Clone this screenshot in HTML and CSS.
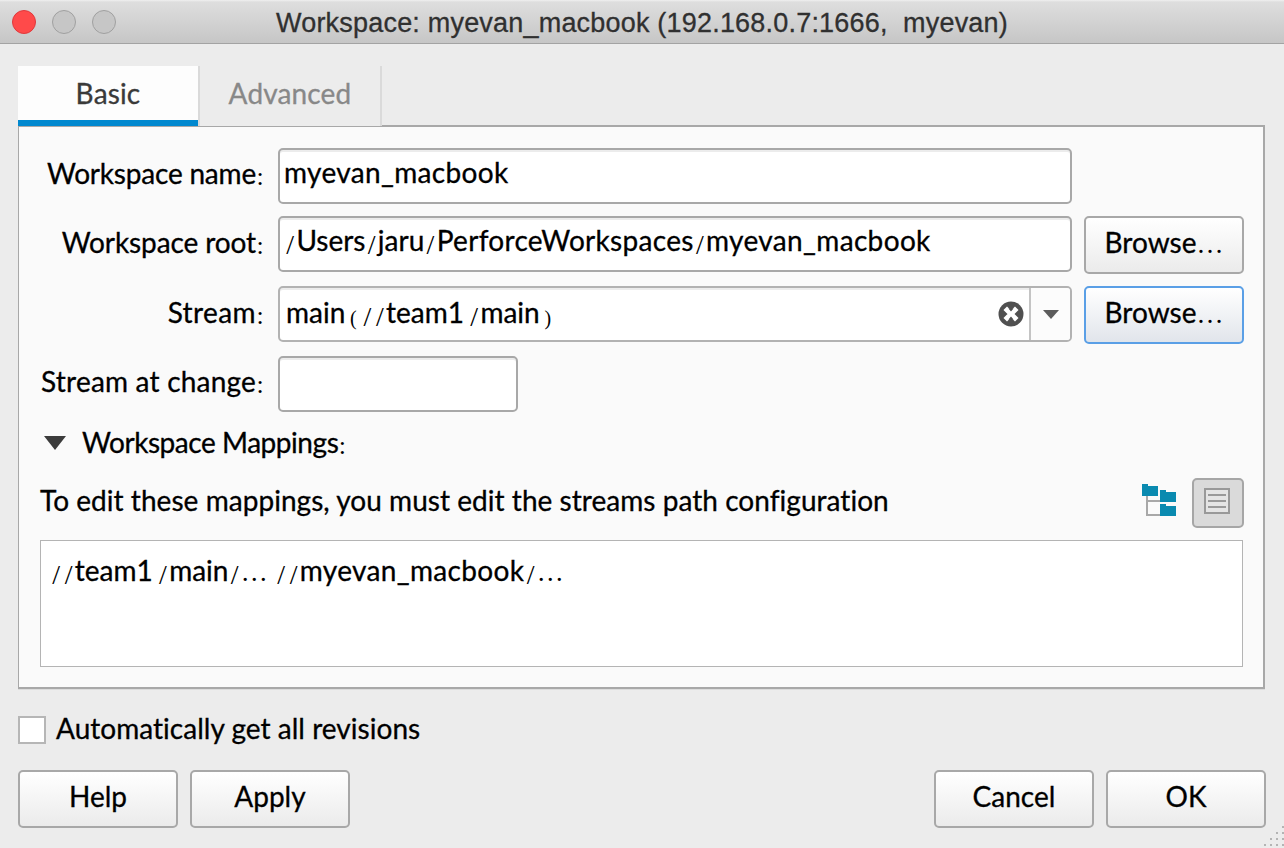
FILE: index.html
```
<!DOCTYPE html>
<html lang="en">
<head>
<meta charset="utf-8">
<title>Workspace: myevan_macbook</title>
<link rel="stylesheet" href="styles.css">
</head>
<body>
<div class="window">
  <header class="titlebar">
    <div class="lights"><i class="light close"></i><i class="light"></i><i class="light"></i></div>
    <h1 class="title">Workspace: myevan_macbook (192.168.0.7:1666,&nbsp; myevan)</h1>
  </header>

  <nav class="tabs">
    <div class="tab active">Basic</div>
    <div class="tab">Advanced</div>
  </nav>

  <main class="panel">
    <div class="form">
      <label class="label w-name">Workspace name<span class="colon">:</span></label>
      <div class="input wide"><span class="id">myevan_macbook</span></div>
      <span></span>

      <label class="label low w-root">Workspace root<span class="colon">:</span></label>
      <div class="input wide"><span class="slash">/</span>Users<span class="slash">/</span>jaru<span class="slash">/</span><span class="pf">PerforceWorkspaces</span><span class="slash">/</span><span class="id">myevan_macbook</span></div>
      <button class="button">Browse<span class="dots">…</span></button>

      <label class="label low w-stream">Stream<span class="colon">:</span></label>
      <div class="input wide combo">
        <span class="value">main<span class="paren">(</span><span class="slash">/</span><span class="slash">/</span>team1<span class="slash after-digit">/</span>main<span class="paren">)</span></span>
        <svg class="clear" width="26" height="26" viewBox="0 0 26 26"><circle cx="13" cy="13" r="12.5" fill="#505050"/><path d="M9 9l8 8M17 9l-8 8" stroke="#fff" stroke-width="5" stroke-linecap="square"/><path d="M13 10.5l2.5-3h-5zM13 15.5l2.5 3h-5z" fill="#505050"/></svg>
        <span class="drop"><svg width="16" height="9" viewBox="0 0 16 9"><path d="M0 0h16L8 9z" fill="#5c5c5c"/></svg></span>
      </div>
      <button class="button focused">Browse<span class="dots">…</span></button>

      <label class="label w-change">Stream at change<span class="colon">:</span></label>
      <div class="input short"></div>
      <span></span>
    </div>

    <div class="disclosure">
      <svg width="22" height="14" viewBox="0 0 22 14"><path d="M0 0h22L11 14z" fill="#3b3b3b"/></svg>
      <span class="heading">Workspace Mappings<span class="colon">:</span></span>
    </div>

    <div class="hint">
      <span class="hint-text">To edit these mappings, you must edit the streams path configuration</span>
      <svg class="tree" width="34" height="32" viewBox="0 0 34 32">
        <path d="M5 12v19h14M5 17h14" fill="none" stroke="#a8a8a8" stroke-width="2"/>
        <path d="M0 0h6v2h10v10H0zM18 6h6v2h10v10H18zM18 20h6v2h10v10H18z" fill="#0a8ab0"/>
      </svg>
      <span class="toggle">
        <svg width="26" height="26" viewBox="0 0 26 26"><path d="M1 1h24v24H1z" fill="#e4e4e4" stroke="#999" stroke-width="2"/><path d="M4 7h18M4 13h18M4 19h18" stroke="#999" stroke-width="2"/></svg>
      </span>
    </div>

    <div class="mappings"><span class="slash">/</span><span class="slash">/</span>team1<span class="slash after-digit">/</span>main<span class="slash">/</span><span class="dots">…</span> <span class="slash">/</span><span class="slash">/</span><span class="id">myevan_macbook</span><span class="slash">/</span><span class="dots">…</span></div>
  </main>

  <label class="auto"><i class="checkbox"></i>Automatically get all revisions</label>

  <footer class="actions">
    <button class="button">Help</button>
    <button class="button">Apply</button>
    <span class="spacer"></span>
    <button class="button">Cancel</button>
    <button class="button">OK</button>
  </footer>

  <svg class="grip" width="20" height="20" viewBox="0 0 20 20"><path d="M18 0h2v2h-2zM12 6h2v2h-2zM18 6h2v2h-2zM6 12h2v2H6zM12 12h2v2h-2zM18 12h2v2h-2zM0 18h2v2H0zM6 18h2v2H6zM12 18h2v2h-2zM18 18h2v2h-2z" fill="#b4b4b4"/></svg>
</div>
</body>
</html>
```
FILE: styles.css
```
* { box-sizing: border-box; }

body {
  margin: 0;
  background: #ececec;
  color: #000;
  font: 28px/34px Lato, "Liberation Sans", sans-serif;
  font-variant-ligatures: none;
  -webkit-text-stroke: 0.3px;
}

.window {
  position: relative;
  width: 1284px;
  height: 848px;
  overflow: hidden;
  white-space: nowrap;
}

svg { display: block; flex: none; }

.titlebar {
  display: grid;
  grid-template-columns: 1fr auto 1fr;
  align-items: start;
  height: 44px;
  border-bottom: 1px solid #a3a3a3;
  background: linear-gradient(#f0f0f0 0, #dedede 2px, #c6c6c6 100%);
}
.lights { display: flex; gap: 16px; padding: 10px 0 0 12px; }
.light {
  width: 24px;
  height: 24px;
  border: 1px solid #a0a0a0;
  border-radius: 50%;
  background: #c6c6c6;
}
.light.close { border-color: #e0393c; background: #ff4a4a; }
.title {
  margin: 0;
  color: #303030;
  font: 400 27px/46px "Liberation Sans", Arial, sans-serif;
  letter-spacing: 0.2px;
}

.tabs {
  position: relative;
  z-index: 1;
  display: flex;
  width: 364px;
  margin: 22px 0 -1px 18px;
}
.tab {
  width: 182px;
  height: 60px;
  border-right: 2px solid #dadada;
  background: #ececec;
  color: #888;
  line-height: 54px;
  letter-spacing: 0.15px;
  text-align: center;
}
.tab.active {
  background: linear-gradient(#0088cf, #0088cf) bottom / 100% 6px no-repeat content-box, #fdfdfd;
  color: #3a3a3a;
}

.panel {
  width: 1247px;
  height: 564px;
  margin-left: 18px;
  padding: 21px 20px 0 21px;
  border: solid #a8a8a8;
  border-width: 2px 2px 2px 1px;
  background: #fafafa;
  box-shadow: 0 1px 0 #dcdcdc;
}

.form {
  display: grid;
  grid-template-columns: 226px 794px 160px;
  gap: 12px;
  align-items: start;
}
.label { padding-right: 2px; line-height: 50px; text-align: right; }
.label.low { line-height: 52px; }
.w-name { letter-spacing: -0.2px; }
.w-root { letter-spacing: -0.1px; }
.w-stream { letter-spacing: 0.4px; }
.w-change { letter-spacing: 0.2px; }

.input {
  height: 56px;
  padding-left: 4px;
  border: 2px solid #a8a8a8;
  border-radius: 5px;
  background: #fff;
  box-shadow: inset 0 2px 0 #ececec;
  line-height: 44px;
}
.input.short { width: 240px; }
.combo {
  display: flex;
  align-items: center;
  padding-left: 6px;
  border-color: #b2b2b2;
}
.value { flex: 1; line-height: 48px; align-self: flex-start; }
.clear { margin-right: 5px; }
.drop {
  display: flex;
  align-items: center;
  justify-content: center;
  width: 41px;
  height: 52px;
  border-left: 2px solid #c4c4c4;
  background: #fcfcfc;
  border-radius: 0 3px 3px 0;
}

.button {
  width: 160px;
  height: 58px;
  padding: 0 0 6px;
  border: 2px solid #a8a8a8;
  border-radius: 5px;
  background: linear-gradient(#fff, #ebebeb);
  color: inherit;
  font: inherit;
  line-height: 48px;
}
.button.focused {
  border-color: #5a9fe6;
  background: linear-gradient(#fff, #e1e5eb);
}

.slash, .paren, .colon, .dots {
  display: inline-block;
  font-family: "Liberation Serif", serif;
  font-size: 28px;
  line-height: 20px;
  letter-spacing: 0;
  text-align: center;
  -webkit-text-stroke: 0;
}
.slash { width: 12.4px; vertical-align: -3px; }
.slash.after-digit { margin-left: 4px; }
.paren { width: 16px; font-size: 20px; vertical-align: -2px; }
.colon { width: 8px; font-size: 26px; vertical-align: -1px; }
.dots { width: 27px; font-size: 27px; }
.id { letter-spacing: 0.35px; }
.pf { letter-spacing: 0.3px; }

.disclosure { display: flex; align-items: center; gap: 16px; height: 34px; margin: 14px 0 0 4px; }
.heading { margin-top: -3px; letter-spacing: -0.45px; }

.hint { display: flex; align-items: flex-start; width: 1204px; height: 50px; margin-top: 18px; }
.hint-text { flex: 1; line-height: 44px; letter-spacing: 0.04px; }
.tree { margin: 6px 16px 0 0; }
.toggle {
  width: 52px;
  height: 50px;
  padding: 8px 0 0 10px;
  border: 2px solid #a6a6a6;
  border-radius: 5px;
  background: #dadada;
}

.mappings {
  width: 1203px;
  height: 127px;
  margin-top: 12px;
  padding: 0 9px;
  border: 1px solid #b4b4b4;
  background: #fff;
  line-height: 58px;
}

.auto { display: flex; align-items: center; gap: 10px; height: 34px; margin: 22px 0 0 18px; letter-spacing: 0.03px; }
.checkbox { width: 28px; height: 28px; margin-top: 4px; border: 2px solid #b6b6b6; background: #fff; }

.actions { display: flex; gap: 12px; padding: 25px 18px 0; }
.spacer { flex: 1; }

.grip { position: absolute; right: 0; bottom: 2px; }
```
